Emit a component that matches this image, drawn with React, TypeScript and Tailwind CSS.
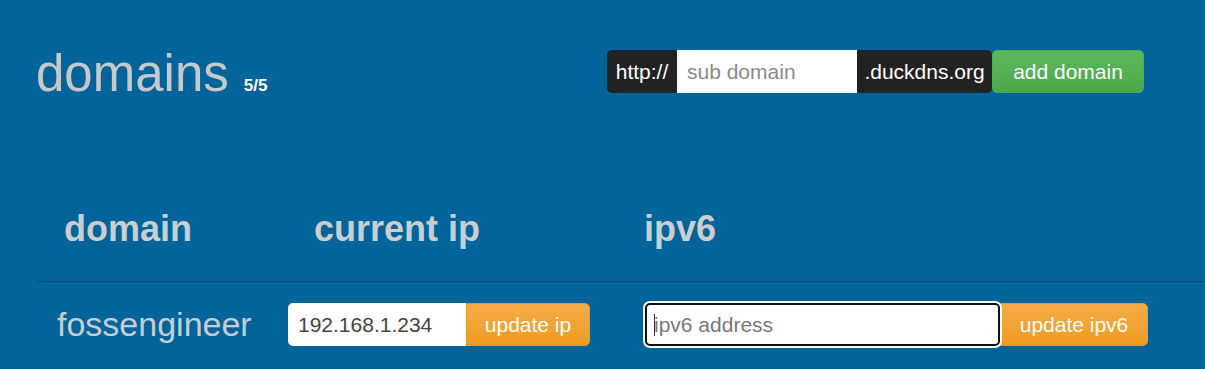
import React, { useState } from 'react';

const font = { fontFamily: '"Liberation Sans", Arial, sans-serif' };

const App: React.FC = () => {
  const [sub, setSub] = useState('');
  const [ipv6, setIpv6] = useState('');
  const [ip, setIp] = useState('192.168.1.234');

  return (
    <div className="w-full h-[369px] bg-[#01649b] overflow-hidden" style={font}>
      {/* top: title + add domain */}
      <div className="h-[207px] pt-[46px] pl-[36px] flex items-start">
        <div className="flex items-baseline gap-[15px]">
          <h1 className="text-[51px] leading-[55px] text-[#c8c8c8] font-normal">domains</h1>
          <span className="text-[17px] font-bold text-white">5/5</span>
        </div>
        <div className="ml-auto mr-[61px] mt-[4px] flex h-[43px]">
          <span className="flex items-center justify-center w-[70px] bg-[#222222] text-white text-[21px] rounded-l-[5px] rounded-r-[2px]">
            http://
          </span>
          <input
            value={sub}
            onChange={(e) => setSub(e.target.value)}
            placeholder="sub domain"
            className="w-[180px] bg-white px-[10px] text-[21px] text-[#555] placeholder:text-[#8a8a8a] outline-none"
          />
          <span className="flex items-center justify-center w-[135px] bg-[#222222] text-white text-[21px] rounded-r-[5px] rounded-l-[2px]">
            .duckdns.org
          </span>
          <button className="w-[152px] text-[21px] text-white rounded-[5px] bg-gradient-to-b from-[#5cb85c] to-[#4aa84a] border border-[#4cae4c]">
            add domain
          </button>
        </div>
      </div>

      {/* table */}
      <div className="ml-[37px]">
        <div className="grid grid-cols-[251px_355px_1fr] h-[75px] border-b border-[#0b4577] text-[36px] leading-[40px] font-bold text-[#cdcdcd]">
          <div className="pl-[27px] pt-[2px]">domain</div>
          <div className="pl-[26px] pt-[2px]">current ip</div>
          <div className="pl-[1px] pt-[2px]">ipv6</div>
        </div>

        <div className="grid grid-cols-[251px_355px_1fr] pt-[21px] items-center">
          <div className="pl-[20px] text-[34px] text-[#c9cdd2] leading-[43px]">fossengineer</div>
          <div className="flex h-[43px]">
            <input
              value={ip}
              onChange={(e) => setIp(e.target.value)}
              className="w-[178px] bg-white rounded-l-[5px] px-[10px] text-[21px] text-[#444] outline-none"
            />
            <button className="w-[124px] text-[21px] text-white rounded-r-[5px] bg-gradient-to-b from-[#f5ac45] to-[#ee9a1c] border border-[#e69a2e]">
              update ip
            </button>
          </div>
          <div className="flex h-[43px] pl-[2px]">
            <div className="relative">
              <input
                value={ipv6}
                onChange={(e) => setIpv6(e.target.value)}
                placeholder="ipv6 address"
                className="w-[355px] h-[43px] bg-white rounded-[5px] border-[2.5px] border-[#111] shadow-[0_0_0_2px_#ffffff] px-[7px] text-[21px] text-[#444] placeholder:text-[#777] outline-none"
              />
              {ipv6 === '' && (
                <span className="absolute left-[9px] top-[11px] w-[1px] h-[22px] bg-[#333]" />
              )}
            </div>
            <button className="w-[148px] text-[21px] text-white rounded-r-[5px] bg-gradient-to-b from-[#f5ac45] to-[#ee9a1c] border border-[#e69a2e]">
              update ipv6
            </button>
          </div>
        </div>
      </div>
    </div>
  );
};

export default App;
